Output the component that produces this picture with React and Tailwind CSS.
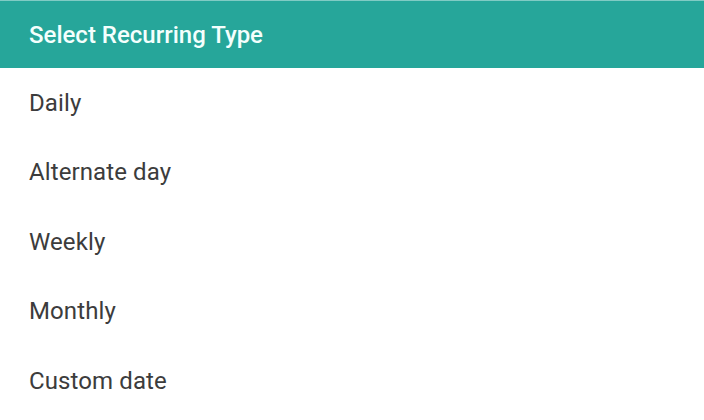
export default function App() {
  const items = ["Daily", "Alternate day", "Weekly", "Monthly", "Custom date"];
  return (
    <div className="w-[704px] h-[420px] bg-white overflow-hidden" style={{ fontFamily: "Roboto, sans-serif" }}>
      <div className="h-[68px] bg-[#26a69a] border-t border-[#80cbc4] flex items-center pl-[29px] text-[#f4fffd] text-[24px] font-medium">
        Select Recurring Type
      </div>
      {items.map((t) => (
        <div key={t} className="h-[69.5px] flex items-center pl-[29px] text-[24px] tracking-[0.1px] text-[#3c3c3c]">
          {t}
        </div>
      ))}
    </div>
  );
}
